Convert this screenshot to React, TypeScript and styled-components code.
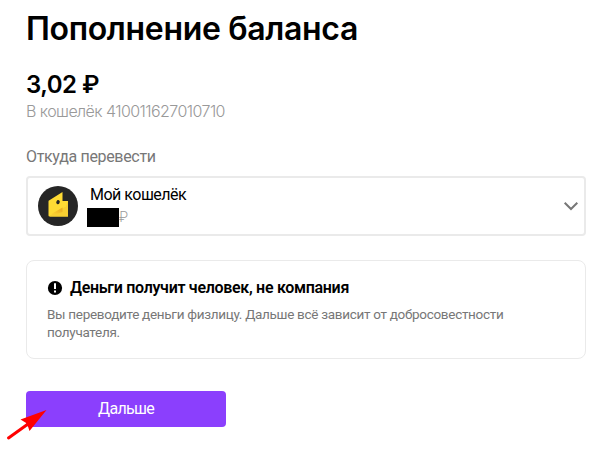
import React from "react";
import styled, { createGlobalStyle } from "styled-components";

const GlobalStyle = createGlobalStyle`
  *, *::before, *::after { box-sizing: border-box; }
  body { margin: 0; background: #fff; font-family: Roboto, "Noto Sans", sans-serif; color: #000; }
  h1, h2, p { margin: 0; }
`;

const Page = styled.main`
  position: relative;
  width: 595px;
  height: 453px;
  padding: 9px 9px 0 26px;
  overflow: hidden;
  display: flex;
  flex-direction: column;
  white-space: nowrap;
`;

const Title = styled.h1`
  font-family: Inter, sans-serif;
  font-size: 32px;
  line-height: 40px;
  font-weight: 600;
  letter-spacing: -0.33px;
`;

const Amount = styled.p`
  margin-top: 21px;
  font-family: Inter, sans-serif;
  font-size: 24px;
  line-height: 30px;
  font-weight: 600;
  letter-spacing: -0.5px;
`;

const WalletNumber = styled.p`
  margin-top: 0;
  font-family: Inter, sans-serif;
  font-size: 16px;
  line-height: 22px;
  font-weight: 300;
  letter-spacing: -0.57px;
  color: #999;
`;

const Label = styled.p`
  margin-top: 25px;
  font-size: 16px;
  line-height: 20px;
  letter-spacing: -0.33px;
  color: #777;
`;

const Select = styled.div`
  margin-top: 9px;
  width: 560px;
  height: 60px;
  border: 2px solid #eaeaea;
  border-radius: 4px;
  display: flex;
  align-items: center;
  padding: 0 5px 0 10px;
`;

const SourceInfo = styled.div`
  flex: 1;
  margin-left: 9px;
  margin-top: -2px;
  display: flex;
  flex-direction: column;
`;

const SourceName = styled.span`
  margin-left: 3px;
  font-size: 16px;
  line-height: 22px;
  letter-spacing: -0.5px;
`;

const Balance = styled.span`
  display: flex;
  align-items: center;
  height: 21px;
  padding-top: 2px;
  font-size: 14px;
  line-height: 19px;
  font-weight: 300;
  color: #999;
`;

const Redaction = styled.span`
  width: 32px;
  height: 19px;
  background: #000;
`;

const Notice = styled.section`
  margin-top: 24px;
  width: 560px;
  height: 99px;
  border: 1px solid #eaeaea;
  border-radius: 8px;
  padding: 16px 20px;
`;

const NoticeHead = styled.div`
  display: flex;
  align-items: center;
  gap: 7px;
`;

const NoticeTitle = styled.h2`
  font-size: 16px;
  line-height: 22px;
  font-weight: 600;
  letter-spacing: -0.3px;
`;

const NoticeText = styled.p`
  margin-top: 6px;
  font-size: 13.5px;
  line-height: 18px;
  letter-spacing: -0.3px;
  color: #777;
`;

const Button = styled.button`
  margin-top: 32px;
  width: 200px;
  height: 36px;
  padding: 0;
  border: 0;
  border-radius: 4px;
  background: #8b3ffd;
  color: #fff;
  font: 400 16px/36px Roboto, sans-serif;
  letter-spacing: -0.7px;
`;

const Pointer = styled.svg`
  position: absolute;
  left: 0;
  top: 403px;
`;

const WalletIcon = () => (
  <svg width="40" height="40" viewBox="0 0 40 40">
    <defs>
      <linearGradient id="fold" x1="0" y1="1" x2="1" y2="0">
        <stop offset="0" stopColor="#ffd633" />
        <stop offset="1" stopColor="#e9a820" />
      </linearGradient>
    </defs>
    <circle cx="20" cy="20" r="20" fill="#262626" />
    <path d="M11 14.5 24.5 6V15H30V30.5H11.5Q10.5 30.5 10.5 29.5V15.4Q10.5 14.8 11 14.5Z" fill="#ffdb34" />
    <path d="M12 29.5 28 20.5 30 15V30.5H12Z" fill="#f8cf32" />
    <path d="M13 28.3 24.5 21.5V26L20 27.5Z" fill="url(#fold)" />
    <ellipse cx="20" cy="16.2" rx="1.7" ry="2.1" transform="rotate(25 20 16.2)" fill="#262626" />
  </svg>
);

export default function App() {
  return (
    <>
      <GlobalStyle />
      <Page>
        <Title>Пополнение баланса</Title>
        <Amount>3,02 ₽</Amount>
        <WalletNumber>В кошелёк 410011627010710</WalletNumber>
        <Label>Откуда перевести</Label>
        <Select>
          <WalletIcon />
          <SourceInfo>
            <SourceName>Мой кошелёк</SourceName>
            <Balance><Redaction />₽</Balance>
          </SourceInfo>
          <svg width="16" height="10" viewBox="0 0 16 10" fill="none" stroke="#777" strokeWidth="2">
            <path d="M1.7 1.7 8 8 14.3 1.7" />
          </svg>
        </Select>
        <Notice>
          <NoticeHead>
            <svg width="16" height="16" viewBox="0 0 16 16">
              <circle cx="8" cy="8" r="7.1" fill="#000" />
              <path d="M7 3.3H9V9H7ZM7 10.5H9V12.5H7Z" fill="#fff" />
            </svg>
            <NoticeTitle>Деньги получит человек, не компания</NoticeTitle>
          </NoticeHead>
          <NoticeText>
            Вы переводите деньги физлицу. Дальше всё зависит от добросовестности<br />получателя.
          </NoticeText>
        </Notice>
        <Button>Дальше</Button>
        <Pointer width="50" height="40" viewBox="0 0 50 40">
          <path d="M8.5 35 28 21" stroke="#f00" strokeWidth="3" strokeLinecap="round" />
          <path d="M46.5 7 20.5 16.5 27 20.5 29.5 28Z" fill="#f00" />
        </Pointer>
      </Page>
    </>
  );
}
